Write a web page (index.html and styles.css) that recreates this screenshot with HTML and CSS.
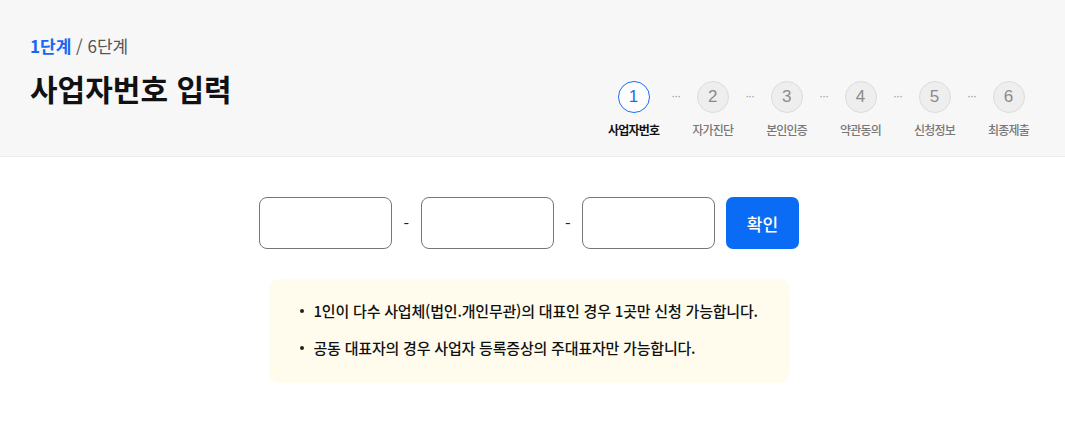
FILE: index.html
```html
<!DOCTYPE html>
<html lang="ko">
<head>
<meta charset="utf-8">
<link rel="stylesheet" href="styles.css">
</head>
<body>
<header class="head">
  <div class="head-left">
    <div class="crumb"><span class="cur">1단계</span> / 6단계</div>
    <h1 class="title">사업자번호 입력</h1>
  </div>
  <ol class="steps">
    <li class="step active"><span class="circle">1</span><span class="label">사업자번호</span></li>
    <li class="sep">···</li>
    <li class="step"><span class="circle">2</span><span class="label">자가진단</span></li>
    <li class="sep">···</li>
    <li class="step"><span class="circle">3</span><span class="label">본인인증</span></li>
    <li class="sep">···</li>
    <li class="step"><span class="circle">4</span><span class="label">약관동의</span></li>
    <li class="sep">···</li>
    <li class="step"><span class="circle">5</span><span class="label">신청정보</span></li>
    <li class="sep">···</li>
    <li class="step"><span class="circle">6</span><span class="label">최종제출</span></li>
  </ol>
</header>
<main class="main">
  <div class="wrap">
    <div class="form-row">
      <input class="field" type="text">
      <span class="dash">-</span>
      <input class="field" type="text">
      <span class="dash">-</span>
      <input class="field" type="text">
      <button class="btn" type="button">확인</button>
    </div>
    <ul class="notice">
      <li>1인이 다수 사업체(법인.개인무관)의 대표인 경우 1곳만 신청 가능합니다.</li>
      <li>공동 대표자의 경우 사업자 등록증상의 주대표자만 가능합니다.</li>
    </ul>
  </div>
</main>
</body>
</html>
```
FILE: styles.css
```css
* { box-sizing: border-box; }
html, body { margin: 0; padding: 0; background: #fff; }
body {
  font-family: "Noto Sans CJK KR", "Noto Sans", sans-serif;
  color: #111;
}
.head {
  display: flex;
  justify-content: space-between;
  align-items: flex-start;
  height: 157px;
  padding: 0 36px 0 30px;
  background: #f7f7f7;
  border-bottom: 1px solid #ebebeb;
}
.head-left { padding-top: 36px; }
.crumb {
  font-size: 17px;
  line-height: 20px;
  color: #555;
}
.crumb .cur { color: #1767f2; font-weight: 700; }
.title {
  margin: 13px 0 0;
  font-size: 30px;
  line-height: 38px;
  font-weight: 700;
  color: #111;
}
.steps {
  display: flex;
  align-items: flex-start;
  list-style: none;
  margin: 0;
  padding: 81px 0 0;
}
.step {
  display: flex;
  flex-direction: column;
  align-items: center;
}
.circle {
  width: 32px;
  height: 32px;
  border-radius: 50%;
  border: 1px solid #dcdcdc;
  background: #eeeeee;
  color: #8a8a8a;
  font-size: 17px;
  display: flex;
  align-items: center;
  justify-content: center;
  font-family: "Liberation Sans", Arial, sans-serif;
}
.step.active .circle {
  background: #fff;
  border-color: #1a6ff3;
  color: #1a6ff3;
}
.label {
  margin-top: 9px;
  font-size: 12px;
  line-height: 16px;
  letter-spacing: -0.8px;
  color: #777;
  font-weight: 500;
  white-space: nowrap;
}
.step.active .label { color: #111; font-weight: 700; }
.sep {
  width: 33px;
  height: 32px;
  line-height: 30px;
  text-align: center;
  color: #999;
  font-size: 12px;
  letter-spacing: -1px;
  font-family: "Liberation Sans", Arial, sans-serif;
}
.main {
  padding: 40px 7px 0 0;
}
.wrap {
  width: 540px;
  margin: 0 auto;
  display: flex;
  flex-direction: column;
  align-items: center;
}
.form-row {
  display: flex;
  align-items: center;
}
.field {
  width: 133px;
  height: 52px;
  border: 1px solid #767676;
  border-radius: 8px;
  background: #fff;
  padding: 0 10px;
  font-size: 16px;
  outline: none;
}
.dash {
  width: 28.5px;
  text-align: center;
  font-size: 16px;
  color: #222;
}
.btn {
  margin-left: 11px;
  width: 73px;
  height: 52px;
  border: 0;
  border-radius: 7px;
  background: #0a6cf5;
  color: #fff;
  font-family: "Noto Sans CJK KR", sans-serif;
  font-size: 17px;
  font-weight: 500;
}
.notice {
  list-style: none;
  width: 521px;
  margin: 30px 0 0;
  padding: 21px 0 24px 45px;
  background: #fffcee;
  border-radius: 10px;
}
.notice li {
  position: relative;
  font-size: 15px;
  line-height: 22px;
  letter-spacing: -0.2px;
  font-weight: 500;
  color: #111;
}
.notice li + li { margin-top: 15px; }
.notice li::before {
  content: "";
  position: absolute;
  left: -14px;
  top: 9px;
  width: 4px;
  height: 4px;
  border-radius: 50%;
  background: #222;
}
```
